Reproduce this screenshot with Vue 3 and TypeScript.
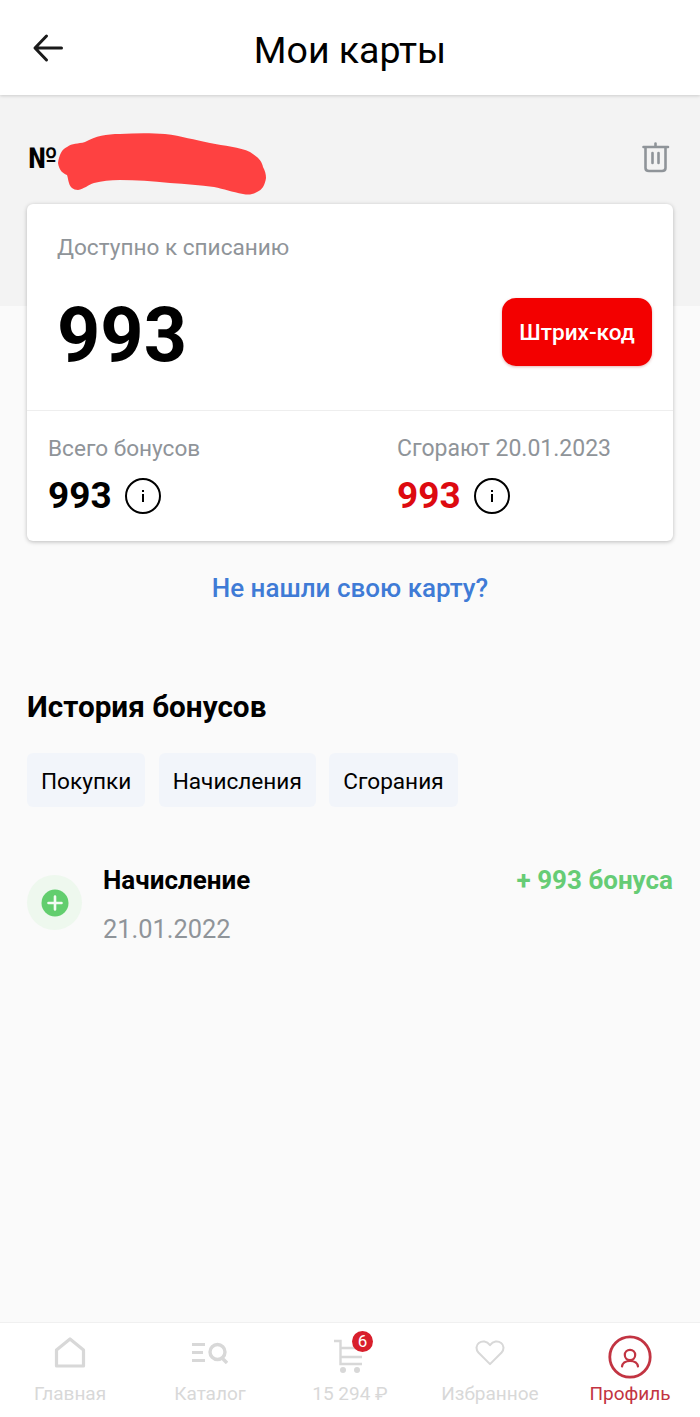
<script setup lang="ts">
import { ref } from 'vue'

interface NavItem {
  label: string
  icon: string
  active?: boolean
}

const filters = ref<string[]>(['Покупки', 'Начисления', 'Сгорания'])

const navItems: NavItem[] = [
  { label: 'Главная', icon: 'home' },
  { label: 'Каталог', icon: 'catalog' },
  { label: '15 294 ₽', icon: 'cart' },
  { label: 'Избранное', icon: 'heart' },
  { label: 'Профиль', icon: 'profile', active: true },
]
</script>

<template>
  <div class="page">
    <header class="header">
      <svg class="back" width="32" height="32" viewBox="0 0 32 32" fill="none">
        <path d="M29.500 16H3.500M14.500 4L3 16L14.500 28" stroke="#1a1a1a" stroke-width="3" stroke-linecap="round" stroke-linejoin="round" />
      </svg>
      <h1 class="title">Мои карты</h1>
    </header>

    <section class="band">
      <div class="number-row">
        <div class="number">
          <span class="num-sign">№</span>
          <svg class="scribble" width="208" height="62" viewBox="0 0 208 62">
            <path d="M0 30C1 22 4 16 9 14C14 10 20 11 27 9C38 3 48 1 62 1C78 0 94 0 107 1C124 3 136 7 152 10C166 13 182 14 192 19C200 24 204 28 205 34C207 38 208 41 208 45C207 52 204 57 199 59C194 62 190 62 185 61C174 59 166 56 156 54C142 52 128 51 112 50C94 48 78 47 62 47C52 47 44 48 36 50C30 52 26 56 20 57C15 57 12 54 11 50C10 47 10 45 9 42C6 41 1 38 0 30Z" fill="#fe4141" />
          </svg>
        </div>
        <svg class="trash" width="28" height="32" viewBox="0 0 28 32" fill="none">
          <path d="M1.500 6H26M13.500 2.500V6M3.500 6V27C3.500 29 5 30 7 30H20C22 30 23.500 29 23.500 27V6M10.500 12V22M16.500 12V22" stroke="#8f9499" stroke-width="2.600" stroke-linecap="round" />
        </svg>
      </div>
    </section>

    <main class="content">
      <div class="card">
        <div class="card-top">
          <div class="avail-label">Доступно к списанию</div>
          <div class="avail-row">
            <span class="avail-value">993</span>
            <button class="barcode" type="button">Штрих-код</button>
          </div>
        </div>
        <div class="card-bottom">
          <div class="stat stat-total">
            <div class="stat-label">Всего бонусов</div>
            <div class="stat-row">
              <span class="stat-value">993</span>
              <span class="info"><span class="info-dot"></span><span class="info-bar"></span></span>
            </div>
          </div>
          <div class="stat stat-burn">
            <div class="stat-label">Сгорают 20.01.2023</div>
            <div class="stat-row">
              <span class="stat-value red">993</span>
              <span class="info"><span class="info-dot"></span><span class="info-bar"></span></span>
            </div>
          </div>
        </div>
      </div>

      <a class="missing">Не нашли свою карту?</a>

      <h2 class="history-title">История бонусов</h2>

      <div class="filters">
        <button v-for="f in filters" :key="f" class="filter" type="button">{{ f }}</button>
      </div>

      <div class="entry">
        <span class="entry-icon">
          <svg width="28" height="28" viewBox="0 0 28 28">
            <circle cx="14" cy="14" r="13.500" fill="#62ce6e" />
            <path d="M14 7.500V20.500M7.500 14H20.500" stroke="#f4fbf4" stroke-width="2.600" stroke-linecap="round" />
          </svg>
        </span>
        <div class="entry-text">
          <div class="entry-title">Начисление</div>
          <div class="entry-date">21.01.2022</div>
        </div>
        <div class="entry-amount">+ 993 бонуса</div>
      </div>
    </main>

    <nav class="nav">
      <div v-for="item in navItems" :key="item.label" class="nav-item" :class="{ active: item.active }">
        <div class="nav-icon">
          <svg v-if="item.icon === 'home'" width="34" height="34" viewBox="0 0 34 34" fill="none">
            <path d="M3.500 14L17 3L30.500 14V30H3.500Z" stroke="#d8d8d8" stroke-width="3.200" stroke-linejoin="round" />
          </svg>
          <svg v-else-if="item.icon === 'catalog'" width="36" height="22" viewBox="0 0 36 22" fill="none">
            <path d="M0 2.500H13M0 10.500H11M0 18.500H13" stroke="#d8d8d8" stroke-width="3" />
            <circle cx="25.500" cy="10" r="7.500" stroke="#d8d8d8" stroke-width="3.400" />
            <path d="M30 16L35 21" stroke="#d8d8d8" stroke-width="3.400" />
          </svg>
          <div v-else-if="item.icon === 'cart'" class="cart-wrap">
            <svg width="32" height="40" viewBox="0 0 32 40" fill="none">
              <path d="M0 8H6.500V31H28M6.500 15H29M6.500 24H28" stroke="#d8d8d8" stroke-width="2.400" />
              <circle cx="9" cy="37" r="3" fill="#d8d8d8" />
              <circle cx="23" cy="37" r="3" fill="#d8d8d8" />
            </svg>
            <span class="badge">6</span>
          </div>
          <svg v-else-if="item.icon === 'heart'" width="30" height="26" viewBox="0 0 32 28" fill="none">
            <path d="M16 26L3.500 13.500C0.500 10 1 5.500 4 3.200C7.500 0.500 12.500 1 16 5.500C19.500 1 24.500 0.500 28 3.200C31 5.500 31.500 10 28.500 13.500Z" stroke="#d8d8d8" stroke-width="2.200" stroke-linejoin="round" />
          </svg>
          <svg v-else class="profile-icon" width="44" height="44" viewBox="0 0 44 44" fill="none">
            <circle cx="22" cy="22" r="20.200" stroke="#c23442" stroke-width="2.800" />
            <circle cx="22" cy="20" r="5.200" stroke="#c23442" stroke-width="2.200" />
            <path d="M14 31.500C14.500 28 17 26 22 26C27 26 29.500 28 30 31.500" stroke="#c23442" stroke-width="2.200" stroke-linecap="round" />
          </svg>
        </div>
        <span class="nav-label">{{ item.label }}</span>
      </div>
    </nav>
  </div>
</template>

<style>
html,
body {
  margin: 0;
  background: #fafafa;
}
</style>

<style scoped>
.page {
  display: flex;
  flex-direction: column;
  width: 700px;
  height: 1417px;
  overflow: hidden;
  background: #fafafa;
  font-family: Roboto, "Noto Sans", sans-serif;
  color: #000;
}

.header {
  position: relative;
  z-index: 2;
  display: flex;
  align-items: center;
  justify-content: center;
  flex: none;
  height: 95px;
  background: #fff;
  box-shadow: 0 1px 3px rgba(0, 0, 0, 0.16);
}

.back {
  position: absolute;
  left: 32px;
  top: 32px;
}

.title {
  margin: 4px 0 0;
  font-size: 37.500px;
  font-weight: 400;
  line-height: 42px;
}

.band {
  flex: none;
  height: 211px;
  box-sizing: border-box;
  padding: 37px 30px 0 28px;
  background: #f3f3f3;
}

.number-row {
  display: flex;
  align-items: flex-start;
  justify-content: space-between;
}

.number {
  display: flex;
  align-items: flex-start;
}

.num-sign {
  margin-top: 10px;
  font-size: 29px;
  font-weight: 700;
  line-height: 32px;
}

.scribble {
  margin: 1px 0 0 1px;
}

.trash {
  margin-top: 9px;
}

.content {
  flex: 1;
  min-height: 0;
  padding: 0 27px;
  margin-top: -102px;
  position: relative;
}

.card {
  box-sizing: border-box;
  height: 337px;
  background: #fff;
  border-radius: 6px;
  box-shadow: 0 1px 4px rgba(0, 0, 0, 0.25);
}

.card-top {
  box-sizing: border-box;
  height: 207px;
  padding: 30px 21px 0 30px;
  border-bottom: 1px solid #eeeeee;
}

.avail-label {
  font-size: 22.600px;
  line-height: 28px;
  color: #8f9499;
}

.avail-row {
  display: flex;
  align-items: flex-start;
  justify-content: space-between;
  margin-top: 25px;
}

.avail-value {
  margin-top: 3px;
  font-size: 75.500px;
  font-weight: 700;
  line-height: 90px;
}

.barcode {
  width: 150px;
  height: 68px;
  margin-top: 11px;
  padding: 0;
  border: 0;
  border-radius: 14px;
  background: #f30000;
  box-shadow: 0 1px 3px rgba(160, 0, 0, 0.3);
  color: #fff;
  font-family: inherit;
  font-size: 22.600px;
  font-weight: 500;
}

.card-bottom {
  display: flex;
  padding: 24px 21px 0;
}

.stat-total {
  width: 349px;
}

.stat-label {
  font-size: 22.600px;
  line-height: 28px;
  color: #8f9499;
}

.stat-burn .stat-label {
  font-size: 23px;
}

.stat-row {
  display: flex;
  align-items: center;
  gap: 13px;
  margin-top: 10px;
}

.stat-value {
  font-size: 37px;
  font-weight: 700;
  line-height: 46px;
}

.red {
  color: #dd0a10;
}

.info {
  display: flex;
  flex-direction: column;
  align-items: center;
  justify-content: center;
  gap: 2px;
  box-sizing: border-box;
  width: 36px;
  height: 36px;
  border: 2px solid #000;
  border-radius: 50%;
}

.info-dot {
  width: 2px;
  height: 2px;
  background: #000;
}

.info-bar {
  width: 2px;
  height: 8px;
  background: #000;
}

.missing {
  display: block;
  margin-top: 31px;
  text-align: center;
  font-size: 26px;
  font-weight: 500;
  line-height: 32px;
  color: #3f7bd6;
}

.history-title {
  margin: 85px 0 0;
  font-size: 29.700px;
  font-weight: 700;
  line-height: 36px;
}

.filters {
  display: flex;
  gap: 13.500px;
  margin-top: 28px;
}

.filter {
  height: 54px;
  padding: 2px 14px 0;
  border: 0;
  border-radius: 6px;
  background: #f2f5fa;
  color: #000;
  font-family: inherit;
  font-size: 22.600px;
}

.entry {
  display: flex;
  align-items: flex-start;
  margin-top: 57px;
}

.entry-icon {
  display: flex;
  align-items: center;
  justify-content: center;
  width: 55px;
  height: 55px;
  margin-top: 11px;
  border-radius: 50%;
  background: #eef8ee;
}

.entry-text {
  flex: 1;
  margin-left: 21px;
}

.entry-title {
  font-size: 26px;
  font-weight: 700;
  line-height: 32px;
}

.entry-date {
  margin-top: 17px;
  font-size: 25.400px;
  line-height: 32px;
  color: #8f9499;
}

.entry-amount {
  font-size: 26px;
  font-weight: 700;
  line-height: 32px;
  color: #66cc75;
}

.nav {
  display: flex;
  flex: none;
  height: 95px;
  background: #fff;
  border-top: 1px solid #f0f0f0;
  box-sizing: border-box;
}

.nav-item {
  display: flex;
  flex: 1;
  flex-direction: column;
  align-items: center;
  color: #d8d8d8;
}

.nav-icon {
  display: flex;
  align-items: center;
  justify-content: center;
  height: 60px;
}

.nav-label {
  font-size: 19px;
  line-height: 22px;
}

.active {
  color: #c23442;
}

.profile-icon {
  margin-top: 7px;
}

.cart-wrap {
  position: relative;
  display: flex;
}

.badge {
  position: absolute;
  top: -2px;
  right: -7px;
  width: 21px;
  height: 21px;
  border-radius: 50%;
  background: #d81f2c;
  color: #fff;
  font-size: 17px;
  line-height: 21px;
  text-align: center;
}
</style>
